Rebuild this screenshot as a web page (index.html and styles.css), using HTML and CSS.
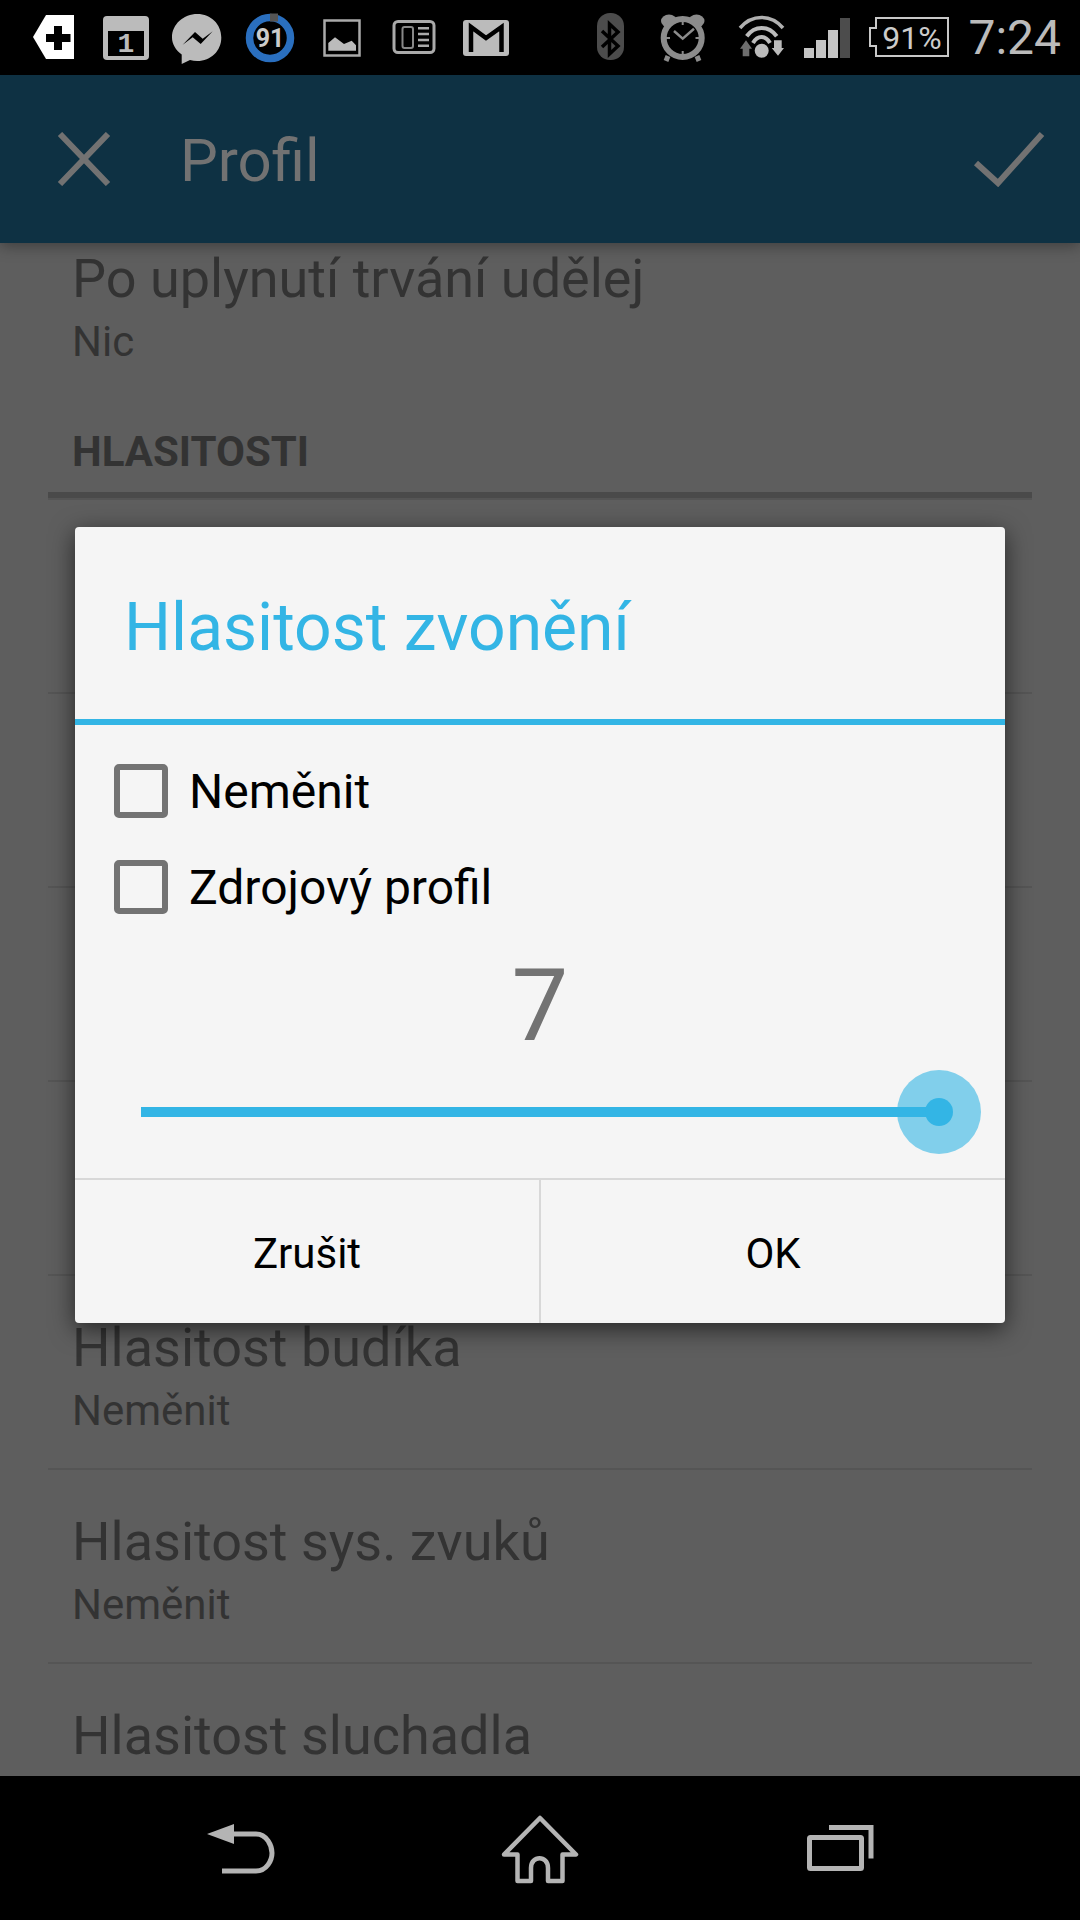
FILE: index.html
```html
<!DOCTYPE html>
<html lang="en">
<head>
  <meta charset="UTF-8" />
  <title>Profil</title>
  <link rel="stylesheet" href="styles.css">
</head>
<body>

<div class="status-bar">
  <svg class="status-icons" width="1080" height="75" viewBox="0 0 1080 75">
    <!-- left notification icons -->
    <polygon points="74,15 46,15 33,37 46,59 74,59" fill="#fff"/>
    <path d="M54 26h8v8h8.500v8h-8.500v8h-8v-8h-8v-8h8z" fill="#000"/>

    <rect x="103" y="16" width="46" height="44" rx="4" fill="#bbb"/>
    <rect x="108" y="31" width="36" height="25" fill="#000"/>
    <text x="126" y="52" class="cal-num">1</text>

    <path d="M197.300 14c13.500 0 24 10 24 23.500s-10.500 23.500-24 23.500c-2.500 0-5-.3-7.300-1l-8.300 4v-9.500c-6-4.300-9.700-10.500-9.700-17 0-13.500 11.800-23.500 25.300-23.500z" fill="#bbb"/>
    <path d="M182.700 44.700l12.300-12.700 7.700 6.700 10-7.400-12 12.700-8-6.700z" fill="#000"/>

    <circle cx="270" cy="38" r="20.500" fill="none" stroke="#2a6fbf" stroke-width="7.500"/>
    <rect x="270" y="13.500" width="8" height="8" fill="#555"/>
    <text x="270" y="47" class="ring-num">91</text>

    <rect x="324.500" y="20.500" width="35" height="35" fill="none" stroke="#aaa" stroke-width="2.500"/>
    <path d="M328.300 50.700v-7.700l6.700-5.700 9 6.700 7.700-3.300 4.300 4.600v5.400z" fill="#bbb"/>

    <rect x="394" y="21.500" width="40" height="31" rx="4" fill="none" stroke="#aaa" stroke-width="3"/>
    <rect x="402.500" y="27" width="10.500" height="21" rx="2" fill="none" stroke="#888" stroke-width="2"/>
    <path d="M418 28.300h11M418 34h11M418 40h11M418 45.700h11" stroke="#aaa" stroke-width="2.500"/>

    <rect x="463" y="20" width="46" height="36" rx="3" fill="#bbb"/>
    <path d="M471 52v-25l15 11 15.500-11v25" fill="none" stroke="#000" stroke-width="4.500"/>

    <!-- right system icons -->
    <rect x="597" y="13" width="27" height="47" rx="13" fill="#4c4c4c"/>
    <path d="M602 31l16 15-8.500 8v-30l8.500 8-16 15" fill="none" stroke="#000" stroke-width="3.500"/>

    <ellipse cx="669" cy="21" rx="8" ry="6.500" fill="#8c8c8c"/>
    <ellipse cx="696.500" cy="21" rx="8" ry="6.500" fill="#8c8c8c"/>
    <circle cx="682.700" cy="38" r="19" fill="#000" stroke="#8c8c8c" stroke-width="6"/>
    <path d="M668 56l-2 5M697 56l2 5" stroke="#8c8c8c" stroke-width="5"/>
    <path d="M674 31l8.700 7.700 11.300-10" fill="none" stroke="#8c8c8c" stroke-width="2.500"/>
    <path d="M682.700 21v4M682.700 51v4M666 38h4M695.500 38h4" stroke="#8c8c8c" stroke-width="2"/>

    <path d="M740 28c12-14 31-14 43 0" fill="none" stroke="#b0b0b0" stroke-width="3.500"/>
    <path d="M746.700 36.300c8-11 22-11 30 0" fill="none" stroke="#bbb" stroke-width="4"/>
    <path d="M753 43c4.500-8 12.500-8 17 0" fill="none" stroke="#bbb" stroke-width="4"/>
    <circle cx="761.700" cy="50.700" r="7" fill="#bbb"/>
    <path d="M746 40.300l6 8.400h-2.700v7.600h-6.600v-7.600h-2.700z" fill="#6e6e6e"/>
    <path d="M774 40.300h7.700v7.700h2.300l-6 7.700-6.300-7.700h2.300z" fill="#bbb"/>

    <rect x="804" y="48" width="10" height="10" fill="#c4c4c4"/>
    <rect x="816" y="40" width="10" height="18" fill="#c4c4c4"/>
    <rect x="828" y="30" width="10" height="28" fill="#c4c4c4"/>
    <rect x="840" y="18" width="10" height="40" fill="#4c4c4c"/>

    <path d="M876 18h72v38h-72v-10h-6v-18h6z" fill="none" stroke="#c8c8c8" stroke-width="2"/>
    <text x="912" y="49" class="batt-num">91%</text>
  </svg>
  <span class="clock">7:24</span>
</div>

<header class="app-bar">
  <svg class="bar-icon" width="54" height="54" viewBox="0 0 54 54">
    <path d="M3 2l48 50M51 2l-48 50" fill="none" stroke="#727272" stroke-width="6"/>
  </svg>
  <h1 class="bar-title">Profil</h1>
  <svg class="bar-icon bar-check" width="72" height="56" viewBox="0 0 72 56">
    <path d="M3 32l22 20 44-49" fill="none" stroke="#727272" stroke-width="6"/>
  </svg>
</header>

<main class="content">
  <div class="list">
    <div class="row no-line">
      <div class="row-title">Po uplynutí trvání udělej</div>
      <div class="row-sub">Nic</div>
    </div>
    <div class="section-head">HLASITOSTI</div>
    <div class="row"></div>
    <div class="row"></div>
    <div class="row"></div>
    <div class="row"></div>
    <div class="row">
      <div class="row-title">Hlasitost budíka</div>
      <div class="row-sub">Neměnit</div>
    </div>
    <div class="row">
      <div class="row-title">Hlasitost sys. zvuků</div>
      <div class="row-sub">Neměnit</div>
    </div>
    <div class="row">
      <div class="row-title">Hlasitost sluchadla</div>
    </div>
  </div>
</main>

<nav class="nav-bar">
  <svg width="1080" height="144" viewBox="0 0 1080 144">
    <path d="M207 58l27-10v20z" fill="#b4b4b4"/>
    <path d="M232 58h24c11 0 16 12 16 19s-5 18-16 18h-34" fill="none" stroke="#b4b4b4" stroke-width="5"/>
    <path d="M540 42l36 36.500h-13.500v26.500h-14.500v-13c0-13-17-13-17 0v13h-13.500v-26.500h-13.500z" fill="none" stroke="#b4b4b4" stroke-width="4.500" stroke-linejoin="round"/>
    <rect x="809.500" y="61.500" width="52" height="31" rx="1" fill="none" stroke="#b4b4b4" stroke-width="5"/>
    <path d="M829 51.500h42v31" fill="none" stroke="#b4b4b4" stroke-width="5"/>
  </svg>
</nav>

<div class="dialog">
  <h2 class="dialog-title">Hlasitost zvonění</h2>
  <div class="dialog-body">
    <div class="check-row"><span class="checkbox"></span>Neměnit</div>
    <div class="check-row"><span class="checkbox"></span>Zdrojový profil</div>
    <div class="value">7</div>
    <div class="slider">
      <div class="slider-track"></div>
      <div class="slider-halo"></div>
      <div class="slider-thumb"></div>
    </div>
  </div>
  <div class="dialog-buttons">
    <div class="dialog-button">Zrušit</div>
    <div class="dialog-button">OK</div>
  </div>
</div>

</body>
</html>
```

FILE: styles.css
```css
* {
  box-sizing: border-box;
}

html, body {
  margin: 0;
  padding: 0;
}

body {
  position: relative;
  width: 1080px;
  height: 1920px;
  overflow: hidden;
  display: flex;
  flex-direction: column;
  background: #5e5e5e;
  font-family: Roboto, sans-serif;
}

.status-bar {
  position: relative;
  flex: none;
  height: 75px;
  background: #000;
}

.status-icons {
  display: block;
}

.status-icons text {
  font-family: Roboto, sans-serif;
}

.status-icons .cal-num {
  font-family: "Liberation Mono", monospace;
  font-size: 28px;
  font-weight: bold;
  fill: #bbb;
  text-anchor: middle;
}

.ring-num {
  font-size: 25px;
  font-weight: 700;
  fill: #ccc;
  text-anchor: middle;
}

.batt-num {
  font-size: 32px;
  fill: #ccc;
  text-anchor: middle;
}

.clock {
  position: absolute;
  top: 8px;
  right: 19px;
  font-size: 48px;
  line-height: 60px;
  color: #bbb;
}

.app-bar {
  position: relative;
  z-index: 2;
  flex: none;
  height: 168px;
  display: flex;
  align-items: center;
  padding: 0 35px 0 57px;
  background: #0e3143;
  box-shadow: 0 3px 14px rgba(0, 0, 0, 0.35);
}

.bar-icon {
  flex: none;
  display: block;
}

.bar-title {
  margin: 2px 0 0 69px;
  flex: 1;
  font-size: 60px;
  font-weight: 400;
  color: #727272;
}

.content {
  flex: 1;
  overflow: hidden;
}

.list {
  margin: -36px 48px 0;
}

.row {
  height: 194px;
  padding: 42px 24px 0;
  border-top: 2px solid #555;
}

.row.no-line {
  height: 193px;
  border-top: none;
}

.row-title {
  font-size: 54px;
  line-height: 60px;
  color: #333;
}

.row-sub {
  margin-top: 2px;
  font-size: 42px;
  line-height: 62px;
  color: #333;
}

.section-head {
  height: 98px;
  padding: 30px 24px 0;
  border-bottom: 6px solid #4a4a4a;
  font-size: 42px;
  line-height: 44px;
  font-weight: 700;
  color: #333;
}

.dialog {
  position: absolute;
  z-index: 3;
  left: 75px;
  top: 527px;
  width: 930px;
  height: 796px;
  display: flex;
  flex-direction: column;
  background: #f5f5f5;
  border-radius: 4px;
  box-shadow: 0 6px 24px rgba(0, 0, 0, 0.6);
}

.dialog-title {
  flex: none;
  height: 198px;
  margin: 0;
  padding: 66px 49px 0;
  border-bottom: 6px solid #33b5e5;
  font-size: 66px;
  line-height: 70px;
  font-weight: 400;
  color: #33b5e5;
}

.dialog-body {
  flex: 1;
  padding: 39px 39px 0;
}

.check-row {
  height: 96px;
  display: flex;
  align-items: flex-start;
  font-size: 48px;
  line-height: 56px;
  color: #000;
}

.checkbox {
  flex: none;
  width: 54px;
  height: 54px;
  margin-right: 21px;
  border: 6px solid #737373;
  border-radius: 5px;
}

.value {
  margin-top: -10px;
  text-align: center;
  font-size: 101px;
  line-height: 120px;
  font-weight: 400;
  color: #737373;
}

.slider {
  position: relative;
  height: 84px;
  margin-top: 4px;
}

.slider-track {
  position: absolute;
  left: 27px;
  right: 27px;
  top: 37px;
  height: 10px;
  background: #33b5e5;
}

.slider-halo {
  position: absolute;
  right: -15px;
  top: 0;
  width: 84px;
  height: 84px;
  border-radius: 50%;
  background: rgba(51, 181, 229, 0.6);
}

.slider-thumb {
  position: absolute;
  right: 13px;
  top: 28px;
  width: 28px;
  height: 28px;
  border-radius: 50%;
  background: #33b5e5;
}

.dialog-buttons {
  flex: none;
  height: 145px;
  display: flex;
  border-top: 2px solid #d8d8d8;
}

.dialog-button {
  flex: 1;
  display: flex;
  align-items: center;
  justify-content: center;
  padding-top: 3px;
  font-size: 42px;
  color: #000;
}

.dialog-button + .dialog-button {
  border-left: 2px solid #d8d8d8;
}

.nav-bar {
  position: relative;
  z-index: 2;
  flex: none;
  height: 144px;
  background: #000;
}

.nav-bar svg {
  display: block;
}
```
